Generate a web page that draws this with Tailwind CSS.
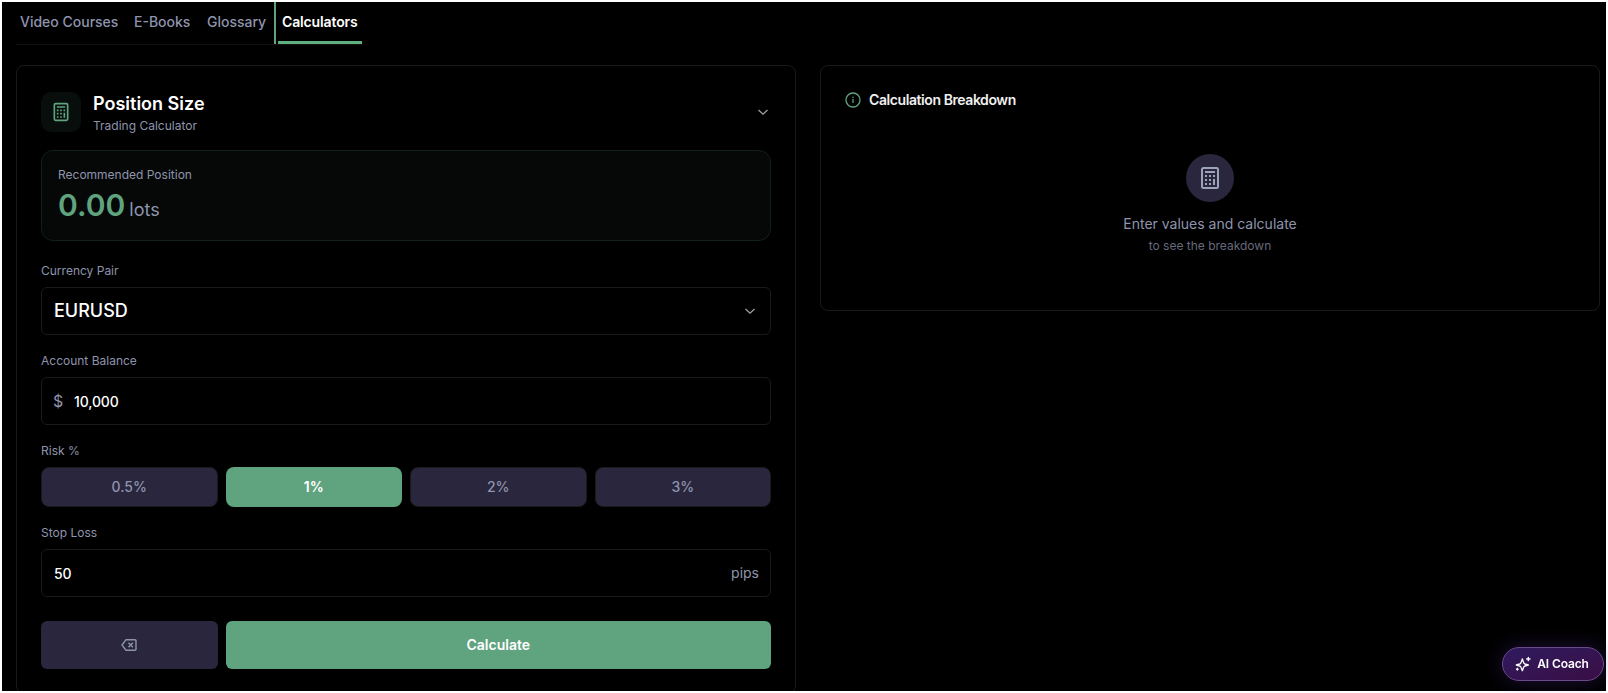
<!DOCTYPE html>
<html lang="en">
<head>
    <meta charset="UTF-8">
    <meta name="viewport" content="width=device-width, initial-scale=1.0">
    <title>Calculators</title>
    <!-- Tailwind CSS -->
    <script src="https://cdn.jsdelivr.net/npm/@tailwindcss/browser@4"></script>
</head>
<body class="bg-white h-screen p-0.5 overflow-hidden font-['Inter',sans-serif] text-[#8f94ad]">
    <!-- Icons -->
    <svg class="hidden">
        <symbol id="icon-calculator" viewBox="0 0 24 24">
            <rect x="4" y="2" width="16" height="20" rx="1.5" fill="none" stroke="currentColor" stroke-width="2"/>
            <path fill="currentColor" d="M7 5h10v2H7zM7 9h2v2H7zM11 9h2v2h-2zM15 9h2v2h-2zM7 13h2v2H7zM11 13h2v2h-2zM7 17h2v2H7zM11 17h2v2h-2zM15 13h2v6h-2z"/>
        </symbol>
        <symbol id="icon-chevron" viewBox="0 0 12 12">
            <path d="M1.5 4 6 8.2 10.5 4" fill="none" stroke="currentColor" stroke-width="1.3"/>
        </symbol>
    </svg>

    <div class="h-full bg-black overflow-hidden pl-3.5 pr-1.5">
        <!-- Tabs -->
        <nav class="flex w-[346px] h-[42.5px] border-b border-[#131313] text-sm font-medium">
            <a class="pl-1 pt-2.5 w-[114px] whitespace-nowrap">Video Courses</a>
            <a class="pl-1 pt-2.5 w-[73px] whitespace-nowrap">E-Books</a>
            <a class="pl-1 pt-2.5 w-[71px] whitespace-nowrap">Glossary</a>
            <a class="pl-1.5 pt-2.5 w-[88px] h-[42px] shrink-0 border-l-2 border-[#5fa37f] text-white font-semibold tracking-[-0.01em] relative">Calculators
                <span class="absolute left-0.5 right-0 bottom-0 h-[3px] bg-[#5fb07f]"></span>
            </a>
        </nav>

        <main class="grid grid-cols-2 gap-6 items-start mt-[20.5px]">
            <!-- Calculator -->
            <section class="h-[629px] rounded-lg border border-[#1a1a1a] px-6 pt-[26px]">
                <header class="flex items-center h-10">
                    <div class="size-10 rounded-[10px] bg-[#080e0b] flex items-center justify-center text-[#5fa37f]">
                        <svg class="size-5"><use href="#icon-calculator"/></svg>
                    </div>
                    <div class="ml-3 flex-1 pt-[3px]">
                        <h2 class="text-lg leading-6 font-semibold text-white">Position Size</h2>
                        <p class="text-xs leading-5">Trading Calculator</p>
                    </div>
                    <svg class="size-3 mr-0.5 text-[#a0a0a0]"><use href="#icon-chevron"/></svg>
                </header>

                <div class="mt-[18px] h-[91px] rounded-xl border border-[#10201a] bg-[#050807] px-4 pt-4">
                    <p class="text-xs leading-4">Recommended Position</p>
                    <p class="mt-1 text-lg leading-9"><span class="text-3xl leading-9 font-semibold text-[#5fa37f]">0.00</span><span class="ml-1">lots</span></p>
                </div>

                <label class="block mt-[22px] text-xs leading-4">Currency Pair</label>
                <div class="mt-2 h-12 rounded-md border border-[#1a1a1a] pl-3 pr-3.5 flex items-center justify-between">
                    <span class="text-lg font-medium text-white">EURUSD</span>
                    <svg class="size-3 text-[#a0a0a0]"><use href="#icon-chevron"/></svg>
                </div>

                <label class="block mt-[18px] text-xs leading-4">Account Balance</label>
                <div class="mt-2 h-12 rounded-md border border-[#1a1a1a] px-[11px] flex items-center">
                    <span class="text-base w-[21px]">$</span>
                    <span class="text-sm font-medium text-white tracking-[-0.01em] pt-0.5">10,000</span>
                </div>

                <label class="block mt-[18px] text-xs leading-4">Risk %</label>
                <div class="mt-2 grid grid-cols-4 gap-2 text-sm font-medium">
                    <button class="h-10 rounded-lg border border-[#1a1a1a] bg-[#29263d]">0.5%</button>
                    <button class="h-10 rounded-lg bg-[#5fa37f] text-white font-semibold">1%</button>
                    <button class="h-10 rounded-lg border border-[#1a1a1a] bg-[#29263d]">2%</button>
                    <button class="h-10 rounded-lg border border-[#1a1a1a] bg-[#29263d]">3%</button>
                </div>

                <label class="block mt-[18px] text-xs leading-4">Stop Loss</label>
                <div class="mt-2 h-12 rounded-md border border-[#1a1a1a] pl-3 pr-[11px] flex items-center justify-between text-sm">
                    <span class="font-medium text-white tracking-[-0.01em] pt-0.5">50</span>
                    <span>pips</span>
                </div>

                <div class="mt-6 grid grid-cols-4 gap-2">
                    <button class="h-12 rounded-md bg-[#29263d] flex items-center justify-center">
                        <svg class="size-4" viewBox="0 0 16 16" fill="none" stroke="currentColor" stroke-width="1.4" stroke-linejoin="round">
                            <path d="M5 2.7h9a1 1 0 0 1 1 1v8.6a1 1 0 0 1-1 1H5L1 8zM7.500 5.800l4.400 4.400M11.900 5.800l-4.400 4.400"/>
                        </svg>
                    </button>
                    <button class="col-span-3 h-12 rounded-md bg-[#5fa37f] text-white text-sm font-semibold">Calculate</button>
                </div>
            </section>

            <!-- Breakdown -->
            <section class="h-[246px] rounded-lg border border-[#1a1a1a] px-6 pt-6">
                <h3 class="flex items-center gap-2 h-5 text-sm font-semibold text-[#f0f0f0] tracking-[-0.03em]">
                    <svg class="size-4 text-[#5fa37f]" viewBox="0 0 16 16" fill="none" stroke="currentColor" stroke-width="1.3">
                        <circle cx="8" cy="8" r="7"/>
                        <path d="M8 7v4M8 4.800V6"/>
                    </svg>
                    Calculation Breakdown
                </h3>
                <div class="mt-11 flex flex-col items-center">
                    <div class="size-12 rounded-full bg-[#29263d] text-[#9ca3bb] flex items-center justify-center">
                        <svg class="size-6"><use href="#icon-calculator"/></svg>
                    </div>
                    <p class="mt-3 text-sm">Enter values and calculate</p>
                    <p class="mt-1 text-xs leading-4 text-[#666a7d]">to see the breakdown</p>
                </div>
            </section>
        </main>
    </div>

    <!-- Floating button -->
    <button class="fixed right-1 bottom-3 w-[102px] h-[34px] pr-0.5 rounded-full border border-[#6a4a8c] bg-linear-to-br from-[#2e1a5e] to-[#3a0d45] shadow-[0_0_20px_rgba(90,50,160,0.35)] text-white text-xs font-semibold tracking-[-0.01em] flex items-center justify-center gap-1.5">
        <svg class="size-4" viewBox="0 0 24 24" fill="none" stroke="currentColor" stroke-width="2" stroke-linejoin="round" stroke-linecap="round">
            <path d="M11 4.500l2 5.500q.5 1.500 2 2l5 1.500-5 1.500q-1.500.5-2 2l-2 5-2-5q-.5-1.500-2-2l-5-1.500 5-1.500q1.500-.5 2-2zM20 2v5M17.500 4.500h5M3.500 18.500v2.500M2.300 19.700h2.400"/>
        </svg>
        AI Coach
    </button>
</body>
</html>
